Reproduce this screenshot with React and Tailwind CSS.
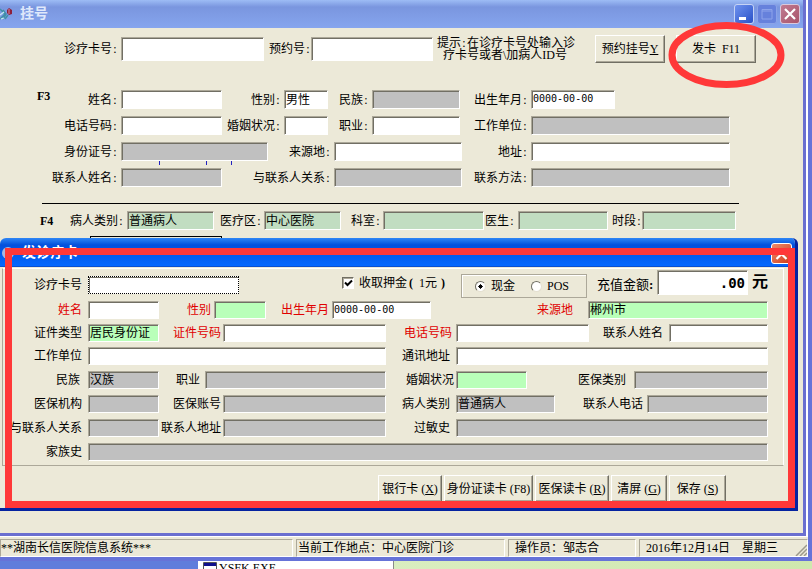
import { useId } from "react";

const TONES = {
  white: "bg-white",
  gray: "bg-[#c0c0c0]",
  sage: "bg-[#c1ddc1]",
  green: "bg-[#b9ffb9]",
};

const SUNKEN =
  "border border-t-[#aca899] border-l-[#aca899] border-r-white border-b-white shadow-[inset_1px_1px_#716f64] rounded-none outline-none";
const RAISED =
  "border border-t-white border-l-white border-r-[#716f64] border-b-[#716f64] shadow-[inset_-1px_-1px_#aca899] bg-[#ece9d8] whitespace-nowrap";

function Colon() {
  return <span className="inline-block w-[6px] text-center">:</span>;
}

function Field({ label, lw, w = "flex-1", h = "h-[19px]", pad = "pr-[3px]", tone = "white", value = "", red, colon, mono }) {
  const id = useId();
  return (
    <>
      <label htmlFor={id} className={`shrink-0 whitespace-nowrap flex justify-end ${lw} ${pad} ${red ? "text-[#e00000]" : ""}`}>
        {label}
        {colon && <Colon />}
      </label>
      <input
        id={id}
        defaultValue={value}
        className={`min-w-0 pl-[1px] pb-[2px] ${w} ${h} ${SUNKEN} ${TONES[tone]} ${w === "flex-1" ? "" : "shrink-0"} ${
          mono ? "font-['DejaVu_Sans_Mono',monospace] text-[10px]" : ""
        }`}
      />
    </>
  );
}

function FormField(props) {
  return <Field colon {...props} />;
}

function CardField(props) {
  return <Field h="h-[18px]" pad="pr-[2px]" {...props} />;
}

function Logo() {
  return (
    <svg width="14" height="16" viewBox="0 0 14 16" className="shrink-0">
      <path d="M0 3l5 5-5 5M3 4l3 4-3 5M8 9l-3 4" stroke="#3f8fa8" strokeWidth="1.5" fill="none" />
      <path d="M0 9l4-3M1 13l3-1" stroke="#c9ecf2" strokeWidth="1.2" />
      <path d="M9 2l3 2v4l-3 1-2-2V4z" fill="#8d1f3a" />
      <path d="M9 3v5" stroke="#d58ba0" strokeWidth="1" />
    </svg>
  );
}

function TitleBar() {
  return (
    <header className="h-[28px] shrink-0 flex items-center pr-[3px] bg-linear-to-b from-[#9dbcf5] via-[#7a96df] via-25% to-[#86a5ee]">
      <Logo />
      <h1 className="ml-[6px] flex-1 text-[14px] leading-[16px] font-bold text-[#dfe8fb]">挂号</h1>
      <div className="flex gap-[3px]">
        <button aria-label="最小化" className="size-[20px] rounded-[3px] border border-[#c5d3f5] bg-linear-to-br from-[#6f92ee] to-[#2a50c8]">
          <svg viewBox="0 0 18 18"><rect x="4" y="12" width="7" height="3" fill="#fff" /></svg>
        </button>
        <button aria-label="最大化" className="size-[20px] rounded-[3px] border border-[#8ba3e8] bg-[#6681dc]">
          <svg viewBox="0 0 18 18"><path d="M4 4.500h10v9.500H4zM4 6h10" fill="none" stroke="#8da3ea" /></svg>
        </button>
        <button aria-label="关闭" className="size-[20px] rounded-[3px] border border-[#d9c9dc] bg-linear-to-br from-[#c07a92] to-[#a9546a]">
          <svg viewBox="0 0 18 18"><path d="M4 4l10 10M14 4L4 14" stroke="#fff" strokeWidth="2.200" /></svg>
        </button>
      </div>
    </header>
  );
}

function RegistrationForm() {
  return (
    <form className="flex-1 bg-[#ece9d8]">
      <div className="flex items-center pt-[7px]">
        <FormField label="诊疗卡号" lw="w-[121px]" w="w-[143px]" h="h-[24px]" />
        <FormField label="预约号" lw="w-[47px]" pad="pr-0" w="w-[122px]" h="h-[24px]" />
        <p className="ml-[4px] w-[158px] shrink-0 leading-[12px]">
          提示<Colon />在诊疗卡号处输入诊
          <span className="block pl-[6px]">疗卡号或者\加病人ID号</span>
        </p>
        <button type="button" className={`w-[70px] h-[28px] shrink-0 ${RAISED}`}>预约挂号<u>Y</u></button>
        <button type="button" className={`ml-[11px] w-[80px] h-[28px] shrink-0 ${RAISED}`}>发卡&nbsp; F11</button>
      </div>

      <div className="flex mt-[27px] pr-[73px]">
        <strong className="w-[37px] -mr-[37px] pl-[37px] leading-[12px]">F3</strong>
        <div className="flex-1 flex flex-col gap-[7px]">
          <div className="flex items-center">
            <FormField label="姓名" lw="w-[121px]" w="w-[101px]" />
            <FormField label="性别" lw="w-[62px]" w="w-[44px]" value="男性" />
            <FormField label="民族" lw="w-[44px]" w="w-[88px]" tone="gray" />
            <FormField label="出生年月" lw="w-[71px]" w="w-[84px]" value="0000-00-00" mono />
          </div>
          <div className="flex items-center">
            <FormField label="电话号码" lw="w-[121px]" w="w-[101px]" />
            <FormField label="婚姻状况" lw="w-[62px]" w="w-[44px]" />
            <FormField label="职业" lw="w-[44px]" w="w-[88px]" />
            <FormField label="工作单位" lw="w-[71px]" tone="gray" />
          </div>
          <div className="flex items-center">
            <FormField label="身份证号" lw="w-[121px]" w="w-[147px]" tone="gray" />
            <FormField label="来源地" lw="w-[66px]" w="w-[128px]" />
            <FormField label="地址" lw="w-[69px]" />
          </div>
          <div className="relative flex items-center">
            <svg width="74" height="4" className="absolute left-[159px] -top-[7px]">
              <path d="M.5 0v4M47.500 0v4M72.500 0v4" stroke="#2222c0" />
            </svg>
            <FormField label="联系人姓名" lw="w-[121px]" w="w-[101px]" tone="gray" />
            <FormField label="与联系人关系" lw="w-[112px]" w="w-[128px]" tone="gray" />
            <FormField label="联系方法" lw="w-[69px]" tone="gray" />
          </div>
        </div>
      </div>

      <hr className="mt-[16px] ml-[42px] mr-[64px] border-black" />

      <div className="flex items-center mt-[7px] pr-[67px]">
        <strong className="w-[54px] shrink-0 pl-[40px]">F4</strong>
        <FormField label="病人类别" lw="w-[73px]" w="w-[87px]" tone="sage" value="普通病人" />
        <FormField label="医疗区" lw="w-[50px]" pad="pr-[2px]" w="w-[77px]" tone="sage" value="中心医院" />
        <FormField label="科室" lw="w-[42px]" pad="pr-[2px]" w="w-[101px]" tone="sage" />
        <FormField label="医生" lw="w-[34px]" w="w-[90px]" tone="sage" />
        <FormField label="时段" lw="w-[34px]" pad="pr-0" tone="sage" />
      </div>
      <div className="mt-[6px] ml-[90px] w-[132px] h-[18px] border border-black" />
    </form>
  );
}

function CardDialog() {
  return (
    <section
      role="dialog"
      aria-label="发诊疗卡"
      className="absolute left-0 right-[5px] top-[238px] rounded-t-[6px] overflow-hidden bg-[#ece9d8] border-r-3 border-b-3 border-[#0523a0]"
    >
      <header className="h-[29px] -mr-[3px] pt-[2px] pr-[6px] flex items-center bg-linear-to-b from-[#2f86f5] via-[#0450dc] via-25% to-[#0468ff] border-b border-[#0a4fd0]">
        <span className="ml-[2px] size-[12px] rounded-full bg-[#a8b8e0]" />
        <h2 className="ml-[8px] flex-1 text-[14px] leading-[16px] font-bold text-white">发诊疗卡</h2>
        <button aria-label="关闭" className="size-[21px] rounded-[3px] border border-white bg-linear-to-br from-[#ee8a6a] to-[#cf3a12]">
          <svg viewBox="0 0 19 19"><path d="M4.500 5l10 10M14.500 5l-10 10" stroke="#fff" strokeWidth="2.200" /></svg>
        </button>
      </header>

      <form>
        <div className="mt-[1px] ml-[2px] mr-[11px] pr-[15px] pb-[4px] border border-t-white border-l-[#aca899] border-b-[#aca899] border-r-white">
          <div className="flex items-center h-[32px]">
            <label htmlFor="card-no" className="w-[85px] pr-[6px] text-right shrink-0">诊疗卡号</label>
            <input
              id="card-no"
              className="w-[151px] h-[18px] bg-white border border-dotted border-black shadow-[inset_1px_1px_#716f64] rounded-none outline-none"
            />
            <label className="ml-auto flex items-center whitespace-nowrap pb-[4px]">
              <input
                type="checkbox"
                defaultChecked
                className="peer appearance-none size-[12px] bg-white border border-t-[#716f64] border-l-[#716f64] border-white shadow-[inset_1px_1px_#aca899]"
              />
              <svg width="12" height="12" className="-ml-[12px] pointer-events-none invisible peer-checked:visible">
                <path d="M3 5.500l2.500 2.500L10 3.500" fill="none" stroke="#000" strokeWidth="2" />
              </svg>
              <span className="ml-[5px] w-[102px]">
                收取押金<b className="inline-block w-[12px] pl-[2px]">(</b>1元<b className="inline-block w-[12px] pl-[4px]">)</b>
              </span>
            </label>
            <div role="radiogroup" aria-label="付款方式" className="w-[126px] h-[24px] mt-[2px] pl-[13px] flex items-center border border-[#aca899] shadow-[inset_1px_1px_#fff]">
              <label className="flex items-center w-[56px]">
                <input type="radio" name="pay" defaultChecked className="appearance-none size-[11px] mr-[5px] rounded-full bg-white border border-t-[#716f64] border-l-[#716f64] border-[#e4e0d0] checked:bg-radial checked:from-black checked:from-30% checked:to-white checked:to-35%" />
                现金
              </label>
              <label className="flex items-center">
                <input type="radio" name="pay" className="appearance-none size-[11px] mr-[5px] rounded-full bg-white border border-t-[#716f64] border-l-[#716f64] border-[#e4e0d0] checked:bg-radial checked:from-black checked:from-30% checked:to-white checked:to-35%" />
                POS
              </label>
            </div>
            <label htmlFor="amount" className="w-[70px] pl-[10px] text-[13px] whitespace-nowrap">充值金额<b>:</b></label>
            <input
              id="amount"
              defaultValue=".00"
              className={`w-[91px] h-[25px] mb-[5px] pr-[2px] text-right bg-white font-['DejaVu_Sans_Mono',monospace] font-bold text-[14px] ${SUNKEN}`}
            />
            <span className="w-[20px] pl-[4px] pb-[6px] text-[16px] leading-[18px] font-bold">元</span>
          </div>

          <div className="flex flex-col gap-[5px]">
            <div className="flex items-center">
              <CardField label="姓名" lw="w-[85px]" pad="pr-[6px]" w="w-[71px]" red />
              <CardField label="性别" lw="w-[55px]" pad="pr-[3px]" w="w-[52px]" tone="green" red />
              <CardField label="出生年月" lw="w-[66px]" pad="pr-[3px]" w="w-[99px]" value="0000-00-00" red mono />
              <CardField label="来源地" lw="w-[157px]" pad="pr-[15px]" tone="green" value="郴州市" red />
            </div>
            <div className="flex items-center">
              <CardField label="证件类型" lw="w-[85px]" pad="pr-[6px]" w="w-[71px]" tone="green" value="居民身份证" />
              <CardField label="证件号码" lw="w-[64px]" w="w-[163px]" red />
              <CardField label="电话号码" lw="w-[70px]" pad="pr-[4px]" w="w-[133px]" red />
              <CardField label="联系人姓名" lw="w-[80px]" pad="pr-[6px]" />
            </div>
            <div className="flex items-center">
              <CardField label="工作单位" lw="w-[85px]" pad="pr-[6px]" w="w-[298px]" />
              <CardField label="通讯地址" lw="w-[70px]" pad="pr-[6px]" />
            </div>
          </div>
          <div className="mt-[6px] flex flex-col gap-[6px]">
            <div className="flex items-center">
              <CardField label="民族" lw="w-[85px]" pad="pr-[8px]" w="w-[71px]" tone="gray" value="汉族" />
              <CardField label="职业" lw="w-[46px]" pad="pr-[5px]" w="w-[181px]" tone="gray" />
              <CardField label="婚姻状况" lw="w-[70px]" w="w-[71px]" tone="green" />
              <CardField label="医保类别" lw="w-[107px]" pad="pr-[8px]" tone="gray" />
            </div>
            <div className="flex items-center">
              <CardField label="医保机构" lw="w-[85px]" pad="pr-[6px]" w="w-[71px]" tone="gray" />
              <CardField label="医保账号" lw="w-[64px]" w="w-[163px]" tone="gray" />
              <CardField label="病人类别" lw="w-[70px]" pad="pr-[6px]" w="w-[99px]" tone="gray" value="普通病人" />
              <CardField label="联系人电话" lw="w-[92px]" pad="pr-[4px]" tone="gray" />
            </div>
            <div className="flex items-center">
              <CardField label="与联系人关系" lw="w-[85px]" pad="pr-[6px]" w="w-[71px]" tone="gray" />
              <CardField label="联系人地址" lw="w-[64px]" w="w-[163px]" tone="gray" />
              <CardField label="过敏史" lw="w-[70px]" pad="pr-[6px]" tone="gray" />
            </div>
            <div className="flex items-center">
              <CardField label="家族史" lw="w-[85px]" pad="pr-[6px]" tone="gray" />
            </div>
          </div>
        </div>

        <div className="flex justify-end gap-[2px] pt-[9px] pr-[69px] pb-[6px]">
          <button type="button" className={`w-[64px] h-[27px] ${RAISED}`}>银行卡 (<u>X</u>)</button>
          <button type="button" className={`w-[89px] h-[27px] ${RAISED}`}>身份证读卡 (F8)</button>
          <button type="button" className={`w-[74px] h-[27px] ${RAISED}`}>医保读卡 (<u>R</u>)</button>
          <button type="button" className={`w-[56px] h-[27px] ${RAISED}`}>清屏 (<u>G</u>)</button>
          <button type="button" className={`w-[57px] h-[27px] ${RAISED}`}>保存 (<u>S</u>)</button>
        </div>
      </form>

      <div className="absolute left-[5px] right-0 top-[10px] bottom-0 border-7 border-[#ff3838] pointer-events-none" />
    </section>
  );
}

function StatusBar() {
  const cell = "flex items-center whitespace-nowrap border border-t-[#aca899] border-l-[#aca899] border-r-white border-b-white";
  return (
    <footer className="h-[20px] shrink-0 flex gap-[3px] pt-[2px] bg-[#ece9d8] leading-[14px]">
      <div className={`w-[293px] ${cell}`}>**湖南长信医院信息系统***</div>
      <div className={`w-[209px] pl-[1px] ${cell}`}>当前工作地点：中心医院门诊</div>
      <div className={`w-[128px] pl-[6px] ${cell}`}>操作员：邹志合</div>
      <div className={`relative flex-1 pl-[6px] gap-[12px] ${cell}`}>
        <span>2016年12月14日</span>
        <span>星期三</span>
        <svg width="12" height="12" className="absolute right-0 bottom-0">
          <path d="M1 12L12 1M5 12l7-7M9 12l3-3" stroke="#9d9a8b" strokeWidth="1.500" />
        </svg>
      </div>
    </footer>
  );
}

function DesktopStrip() {
  return (
    <div className="h-[8px] shrink-0 flex overflow-hidden bg-linear-to-r from-[#e4f3d0] to-[#cfe8ae]">
      <div className="w-[198px] bg-[#5f7ddc]" />
      <div className="w-[196px] pl-[5px] flex items-start bg-white border-r border-[#8a8a8a]">
        <svg width="14" height="8" className="mt-[1px] shrink-0">
          <path d="M.5 8V.5h13V8" fill="#fff" stroke="#555" />
          <path d="M1 2.500h12" stroke="#10108c" strokeWidth="3" />
        </svg>
        <span className="pl-[2px] leading-[14px]">YSFK.EXE</span>
      </div>
    </div>
  );
}

export default function App() {
  return (
    <div className="h-screen min-h-[569px] flex flex-col overflow-hidden text-black text-[12px] leading-[14px] font-['Liberation_Serif','Noto_Sans_CJK_SC',serif]">
      <div className="flex-1 min-h-0 flex flex-col border-r-4 border-b-4 border-[#6673d8] bg-white">
        <div className="relative flex-1 min-h-0 flex flex-col mr-[2px] border-r-3 border-b-3 border-[#6a6fd0]">
          <TitleBar />
          <RegistrationForm />
          <CardDialog />
        </div>
        <div className="h-[1px] shrink-0 bg-white" />
        <StatusBar />
      </div>
      <DesktopStrip />
      <svg width="117" height="68" className="absolute left-[668px] top-[21px] pointer-events-none">
        <ellipse cx="58.500" cy="34" rx="54.500" ry="29.500" fill="none" stroke="#ff3838" strokeWidth="7" />
      </svg>
    </div>
  );
}
